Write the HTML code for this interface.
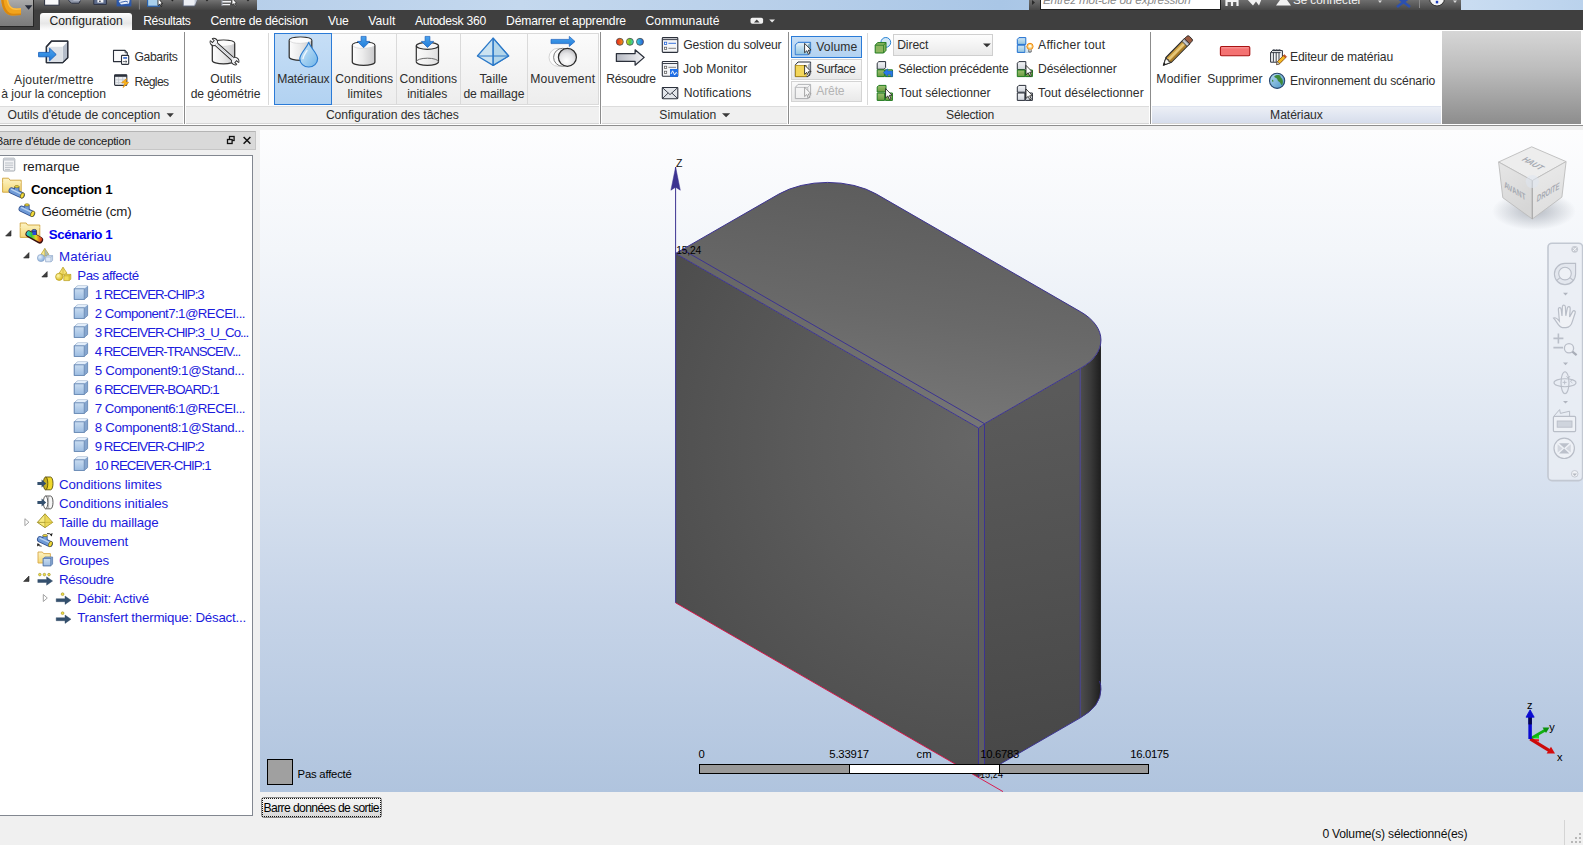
<!DOCTYPE html>
<html lang="fr">
<head>
<meta charset="utf-8">
<title>Autodesk Simulation CFD</title>
<style>
html,body{margin:0;padding:0;background:#f0f0f0;}
body{width:1583px;height:845px;overflow:hidden;font-family:"Liberation Sans",sans-serif;}
#app{position:relative;width:1583px;height:845px;overflow:hidden;background:#f0f0f0;}
#app div,#app svg{position:absolute;}
.t{position:absolute;white-space:nowrap;line-height:20px;font-family:"Liberation Sans",sans-serif;}
/* title bar */
#glass{left:0;top:0;width:1583px;height:10px;background:linear-gradient(90deg,#a8c5e6 0,#b7cfea 250px,#c4d8ee 520px,#b9d0ea 760px,#a9c6e6 1000px,#c9dcf1 1470px,#bad2ec 1583px);}
#qat{left:34px;top:0;width:223px;height:10px;background:linear-gradient(#727272,#585858 50%,#434343);}
#appbtn{left:0;top:0;width:34px;height:27px;background:linear-gradient(#ababab,#8f8f8f 45%,#7a7a7a);border-right:1.5px solid #262626;border-bottom:1.5px solid #262626;box-sizing:border-box;}
#info{left:1029px;top:0;width:432px;height:10px;background:linear-gradient(#6e6e6e,#474747);}
#search{left:1040px;top:-8px;width:179px;height:16px;background:#fff;border:1px solid #1e1e1e;box-sizing:content-box;}
#tabbar{left:0;top:10px;width:1583px;height:20px;background:#3f3f3f;}
#tabact{left:40px;top:13px;width:92px;height:18px;background:linear-gradient(#ffffff 0,#f3f3f3 22%,#e7e7e7 58%,#f8f8f8 85%,#ffffff 100%);border-radius:3px 3px 0 0;}
/* ribbon */
#ribbon{left:0;top:30px;width:1583px;height:95px;background:#fff;}
#ribline{left:0;top:125px;width:1583px;height:1px;background:#8e8e8e;}
.ptitle{top:106px;height:18px;background:#f0f0f0;border-top:1px solid #dcdcdc;border-bottom:1px solid #d6d6d6;box-sizing:border-box;}
.psep{top:32px;width:1px;height:92px;background:#8c8c8c;box-shadow:0 0 0.6px #b0b0b0;}
.tsep{top:33px;width:1px;height:72px;background:#d9d9d9;}
.bigbtn{top:33px;height:72px;background:linear-gradient(#fbfbfb,#ededed);border:1px solid #dadada;box-sizing:border-box;}
.sel{background:linear-gradient(#c6def6,#b2d2f1) !important;border:1px solid #2b7bd7 !important;}
.smbtn{left:791px;width:71px;height:21px;background:linear-gradient(#fafafa,#e9e9e9);border:1px solid #d4d4d4;box-sizing:border-box;}
#combo{left:893px;top:34px;width:100px;height:22px;background:linear-gradient(#fdfdfd,#eaeaea);border:1px solid #cfcfcf;box-sizing:border-box;}
#ribgray{left:1442px;top:31px;width:139px;height:93px;background:linear-gradient(#d6d6d6,#bdbdbd 40%,#8d8d8d);}
/* left panel */
#ptitle{left:0;top:131px;width:256px;height:19px;background:#d9d9d9;border:1px solid #c6c6c6;border-top-color:#b4b4b4;border-left:0;box-sizing:border-box;}
#tree{left:-1px;top:155px;width:254px;height:661px;background:#fff;border:1px solid #828790;box-sizing:border-box;}
/* viewport */
#view{left:260px;top:130px;width:1323px;height:662px;background:linear-gradient(#fdfdfe 0%,#f3f6fa 18%,#dfe7f2 45%,#c6d4e8 72%,#b0c4de 100%);overflow:hidden;}
#outbtn{left:261px;top:797px;width:121px;height:21px;box-sizing:border-box;border:1px solid #8a8a8a;border-radius:3px;background:linear-gradient(#f4f4f4 0,#efefef 50%,#dedede 75%,#d8d8d8 100%);}
#outbtn i{position:absolute;left:0;top:0;right:0;bottom:0;border:1px dotted #111;}
#grip{left:1564px;top:820px;width:1px;height:25px;background:#d4d4d4;}
</style>
</head>
<body>
<div id="app">
<!-- ======= title bar ======= -->
<div id="glass"></div>
<div id="qat"></div>
<div id="info"></div>
<div id="search"></div>
<div id="tabbar"></div>
<div id="appbtn"></div>
<div id="tabact"></div>
<!-- ======= ribbon ======= -->
<div id="ribbon"></div>
<div id="ribgray"></div>
<div class="ptitle" style="left:0;width:183px"></div>
<div class="ptitle" style="left:186px;width:413px"></div>
<div class="ptitle" style="left:602px;width:185px"></div>
<div class="ptitle" style="left:790px;width:359px"></div>
<div class="ptitle" style="left:1152px;width:289px;background:linear-gradient(#eceff6,#d6ddec);border-top-color:#dfe4ef"></div>
<div class="psep" style="left:184px"></div>
<div class="psep" style="left:600px"></div>
<div class="psep" style="left:788px"></div>
<div class="psep" style="left:1150px"></div>
<div class="tsep" style="left:268px"></div>
<div class="tsep" style="left:867px"></div>
<div class="bigbtn sel" style="left:274px;width:58px"></div>
<div class="bigbtn" style="left:332px;width:65px;border-left:0"></div>
<div class="bigbtn" style="left:396px;width:65px"></div>
<div class="bigbtn" style="left:460px;width:68px"></div>
<div class="bigbtn" style="left:527px;width:72px"></div>
<div class="smbtn sel" style="top:36px;height:22px"></div>
<div class="smbtn" style="top:59px"></div>
<div class="smbtn" style="top:81px"></div>
<div id="combo"></div>
<div id="ribline"></div>
<!-- ======= left panel ======= -->
<div id="ptitle"></div>
<div id="tree"></div>
<!-- ======= viewport ======= -->
<div id="view"></div>
<div id="outbtn"><i></i></div>
<div id="grip"></div>
<svg id="scene" style="left:260px;top:130px" width="1323" height="662" viewBox="260 130 1323 662" shape-rendering="auto">
<defs>
  <linearGradient id="gTop" gradientUnits="userSpaceOnUse" x1="827" y1="183" x2="798" y2="405">
    <stop offset="0" stop-color="#5d5d5d"/><stop offset="0.55" stop-color="#696969"/><stop offset="1" stop-color="#767676"/>
  </linearGradient>
  <radialGradient id="gFront" gradientUnits="userSpaceOnUse" cx="975" cy="440" r="400">
    <stop offset="0" stop-color="#666666"/><stop offset="0.45" stop-color="#5a5a5a"/><stop offset="1" stop-color="#494949"/>
  </radialGradient>
  <linearGradient id="gRight" gradientUnits="userSpaceOnUse" x1="1000" y1="400" x2="1060" y2="760">
    <stop offset="0" stop-color="#5a5a5a"/><stop offset="0.5" stop-color="#515151"/><stop offset="1" stop-color="#474747"/>
  </linearGradient>
  <linearGradient id="gRound" gradientUnits="userSpaceOnUse" x1="1080" y1="0" x2="1101" y2="0">
    <stop offset="0" stop-color="#4e4e4e"/><stop offset="0.5" stop-color="#3a3a3a"/><stop offset="1" stop-color="#1d1d1d"/>
  </linearGradient>
  <radialGradient id="gShadow" cx="0.5" cy="0.5" r="0.5">
    <stop offset="0" stop-color="#7f8794" stop-opacity="0.55"/><stop offset="1" stop-color="#7f8794" stop-opacity="0"/>
  </radialGradient>
  <linearGradient id="gCubeL" x1="0" x2="0.4" y1="0" y2="1"><stop offset="0" stop-color="#e6e6e6"/><stop offset="1" stop-color="#d6d6d6"/></linearGradient>
  <linearGradient id="gCubeR" x1="0" x2="0.3" y1="0" y2="1"><stop offset="0" stop-color="#ebebeb"/><stop offset="1" stop-color="#dedede"/></linearGradient>
</defs>
<!-- solid body -->
<g id="body">
  <path id="faceFront" d="M675.6 253.4 L978.5 428 L978.5 777.4 L675.6 602.8 Z" fill="url(#gFront)"/>
  <path id="faceStrip" d="M978.5 428 L984.5 423.7 L984.5 773.1 L978.5 777.4 Z" fill="#5f5f5f"/>
  <path id="faceRight" d="M984.5 423.7 L1080.7 368.2 L1080.7 717.6 L984.5 773.1 Z" fill="url(#gRight)"/>
  <path id="faceRound" d="M1080.7 368.2 A68.95 39.8 0 0 0 1100.95 340 L1100.95 689.4 A68.95 39.8 0 0 1 1080.7 717.6 Z" fill="url(#gRound)"/>
  <path id="faceTop" d="M675.6 253.4 L778.8 194.1 A68.95 39.8 0 0 1 876.4 194.1 L1080.7 311.85 A68.95 39.8 0 0 1 1080.7 368.2 L984.5 423.7 L978.5 428 Z" fill="url(#gTop)"/>
</g>
<!-- feature edges -->
<g fill="none" stroke="#3c3391" stroke-width="1">
  <path d="M675.6 253.4 L778.8 194.1 A68.95 39.8 0 0 1 876.4 194.1 L1080.7 311.85 A68.95 39.8 0 0 1 1080.7 368.2 L984.5 423.7 L978.5 428 Z"/>
  <path d="M682.6 249.6 L984.5 423.7"/>
  <path d="M978.5 428 V777.4 M984.5 423.7 V773.1"/>
  <path d="M1080.2 368.5 V717.6" stroke-opacity="0.9"/>
  <path d="M984.5 773.1 L1080.7 717.6 A68.95 39.8 0 0 0 1100.95 689.4" />
  <path d="M1100.95 689.4 A68.95 39.8 0 0 0 1099.6 681" />
  <path d="M675.6 167 V602.8"/>
</g>
<path d="M675.6 167 L680.3 190.2 L675.6 187.2 L670.9 190.2 Z" fill="#3c3391" stroke="#3c3391" stroke-width="0.5" stroke-linejoin="round"/>
<!-- x axis / bottom edge -->
<path d="M675.6 602.8 L1003 791.6" stroke="#de0a40" stroke-width="0.9" fill="none"/>
<!-- hidden dimension label below the bar -->
<text x="980" y="778.2" font-family="'Liberation Sans',sans-serif" font-size="10.3" fill="#000" textLength="23" lengthAdjust="spacingAndGlyphs">15,24</text>
<!-- scale bar -->
<g stroke="#000" stroke-width="1">
  <rect x="699.5" y="764.5" width="150" height="9" fill="#999999"/>
  <rect x="849.5" y="764.5" width="150" height="9" fill="#ffffff"/>
  <rect x="999.5" y="764.5" width="149" height="9" fill="#999999"/>
</g>
<!-- legend -->
<rect x="267.5" y="759.5" width="25" height="25" fill="#a0a0a0" stroke="#000" stroke-width="1"/>
<!-- axis triad -->
<g id="triad">
  <path d="M1531.4 738.2 L1539 733.8 V738.6 Z" fill="#18e018"/>
  <path d="M1530.2 739 L1539 739.2 V741.4 L1533 740.6 Z" fill="#f01818"/>
  <path d="M1530.4 738.6 L1545.4 730" stroke="#12b012" stroke-width="2.6"/>
  <path d="M1549.4 727.4 L1542.6 727.4 L1546 733 Z" fill="#0c920c"/>
  <path d="M1530.2 738.8 L1549.4 750.6" stroke="#cc0a0a" stroke-width="3.2"/>
  <path d="M1555 753.6 L1546.6 753.6 L1551 746.8 Z" fill="#d40c0c"/>
  <path d="M1530.1 739 V716.5" stroke="#0a0ad2" stroke-width="3.5"/>
  <path d="M1530.1 724.4 V716.5" stroke="#07074a" stroke-width="3.5"/>
  <path d="M1530.1 709.8 L1534.2 717.2 L1526 717.2 Z" fill="#0a0ad2" stroke="#0a0ad2" stroke-width="0.8" stroke-linejoin="round"/>
</g>
<!-- view cube -->
<g id="viewcube">
  <ellipse cx="1534" cy="211" rx="42" ry="19" fill="url(#gShadow)"/>
  <path d="M1531.7 146.8 L1566.1 161.6 L1532.3 180.6 L1498.6 162 Z" fill="#ededed" stroke="#bcbcbc" stroke-width="0.9" stroke-linejoin="round"/>
  <path d="M1498.6 162 L1532.3 180.6 L1532.3 219 L1502.8 197.7 Z" fill="url(#gCubeL)" stroke="#bcbcbc" stroke-width="0.9" stroke-linejoin="round"/>
  <path d="M1532.3 180.6 L1566.1 161.6 L1561.9 197.1 L1532.3 219 Z" fill="url(#gCubeR)" stroke="#bcbcbc" stroke-width="0.9" stroke-linejoin="round"/>
  <path d="M1532.3 180.6 V219" stroke="#a8a8a8" stroke-width="1"/>
  <circle cx="1532.3" cy="181.5" r="6.6" fill="#dfe5f0" fill-opacity="0.55"/>
  <g font-family="'Liberation Sans',sans-serif" font-size="9.6" font-weight="bold" fill="#a6aab2">
    <text transform="matrix(0.70 0.386 -0.87 0.49 1520.9 159.9)">HAUT</text>
    <text transform="matrix(0.68 0.41 0.12 1 1504.4 187.6)">AVANT</text>
    <text transform="matrix(0.60 -0.355 -0.1 1 1536.6 202.2)" font-size="10">DROITE</text>
  </g>
</g>
<!-- navigation bar -->
<g id="navbar" fill="none" stroke="#b9bec8" stroke-width="1.1">
  <rect x="1548" y="243.2" width="34.6" height="237.4" rx="4" fill="#eaeef4" fill-opacity="0.8" stroke="#c2c8d2" stroke-width="1.6"/>
  <circle cx="1574.7" cy="249.3" r="3.4" fill="#c6cad2" stroke="none"/><path d="M1573 247.6 L1576.4 251 M1576.4 247.6 L1573 251" stroke="#f4f6f9" stroke-width="1"/>
  <path d="M1565 263.4 H1575.6 V274 A10.6 10.6 0 1 1 1565 263.4 Z" fill="#e3e7ee"/>
  <circle cx="1565" cy="273.6" r="6.3" fill="#eef1f6"/><path d="M1560 277.6 L1556.6 280.6 M1570 277.6 L1573.4 280.6"/>
  <path d="M1563 292.8 H1568 L1565.5 295.4 Z M1563 362.6 H1568 L1565.5 365.2 Z M1563 363.2 H1568 M1563 401 H1568 L1565.5 403.6 Z" fill="#b0b5bf" stroke="none"/>
  <path d="M1553.6 318 C1556 316.8 1558 319.4 1559.4 321.2 L1558.4 309.6 C1558.2 307 1560.8 307 1561.2 309.4 L1562 316 L1562.4 306.8 C1562.6 304.6 1565.2 304.6 1565.4 307 L1565.8 315.8 L1567.4 308 C1568 305.8 1570.4 306.4 1570.2 308.6 L1569.6 317 L1572.6 311.6 C1573.8 309.8 1575.8 311 1575.2 312.8 L1572.4 321.4 C1571.6 324.4 1569.8 327.4 1566 327.6 H1562.4 C1558.6 327.2 1556.8 321.4 1553.6 318 Z" fill="#f0f2f6" stroke-width="1.2"/>
  <path d="M1558.4 333.4 V343.4 M1553.4 338.4 H1563.4 M1553.4 347.6 H1563" stroke-width="1.6"/>
  <circle cx="1569" cy="348.2" r="4.6" fill="#eef1f6" stroke-width="1.3"/><path d="M1572.4 351.6 L1576.6 355.2" stroke-width="2.2" stroke="#a9aeb8"/>
  <ellipse cx="1565" cy="382.7" rx="11" ry="4"/><ellipse cx="1565" cy="382.7" rx="4" ry="11"/>
  <path d="M1562.6 382.4 H1566.6 M1564.6 380.4 V384.4 M1566.4 376.4 L1568.4 378.4 L1570 376 M1572.6 379.6 L1570.4 381.2 L1572.4 383" stroke-width="0.9"/>
  <rect x="1553.4" y="416.4" width="22.2" height="15.2" rx="1" fill="#eef1f6" stroke-width="1.2"/>
  <rect x="1557.2" y="421" width="14.8" height="6.2" fill="#cfd4dd" stroke-width="0.9"/>
  <path d="M1554 416 L1559.6 409.6 L1560.4 413.4 L1569.6 411.2 V416" stroke-width="1"/>
  <circle cx="1564.2" cy="448.3" r="10.2" fill="#eef1f6" stroke-width="1.2"/>
  <path d="M1559 443.2 H1569.4 L1564.2 448 Z M1559 453.6 H1569.4 L1564.2 448.6 Z" fill="#bcc1cb" stroke="none"/>
  <path d="M1557.6 444.2 L1562.6 448.4 L1557.6 452.6 Z M1570.8 444.2 L1565.8 448.4 L1570.8 452.6 Z" fill="#d3d7df" stroke="none"/>
  <circle cx="1574.7" cy="473.8" r="3.3" fill="#f0f2f6" stroke="#c2c6ce" stroke-width="0.9"/><path d="M1572.4 473.4 H1577 L1574.7 476 Z" fill="#b4b8c0" stroke="none"/>
</g>
</svg>
<svg id="sizegrip" style="left:1570px;top:832px" width="13" height="13" viewBox="0 0 13 13"><g fill="#b8b8b8"><rect x="9" y="9" width="2" height="2"/><rect x="9" y="5" width="2" height="2"/><rect x="5" y="9" width="2" height="2"/><rect x="9" y="1" width="2" height="2"/><rect x="5" y="5" width="2" height="2"/><rect x="1" y="9" width="2" height="2"/></g></svg>
<svg id="ribicons" style="left:0;top:0" width="1583" height="130" viewBox="0 0 1583 130">
<defs>
  <linearGradient id="cylG" x1="0" x2="1" y1="0" y2="0"><stop offset="0" stop-color="#fdfdfd"/><stop offset="0.45" stop-color="#ececec"/><stop offset="1" stop-color="#c9c9cb"/></linearGradient>
  <linearGradient id="blueG" x1="0" x2="0" y1="0" y2="1"><stop offset="0" stop-color="#4ba3ee"/><stop offset="1" stop-color="#1f7bd8"/></linearGradient>
  <linearGradient id="dropG" x1="0" x2="1" y1="0" y2="1"><stop offset="0" stop-color="#d8ecfa"/><stop offset="1" stop-color="#6fb4e8"/></linearGradient>
  <linearGradient id="arrG" x1="0" x2="1" y1="0" y2="0"><stop offset="0" stop-color="#b4b8c2"/><stop offset="1" stop-color="#f4f4f6"/></linearGradient>
  <linearGradient id="d1" x1="0" x2="1"><stop offset="0" stop-color="#e8201c"/><stop offset="1" stop-color="#f09a18"/></linearGradient>
  <linearGradient id="d2" x1="0" x2="1"><stop offset="0" stop-color="#f0d818"/><stop offset="0.5" stop-color="#58c838"/><stop offset="1" stop-color="#38d8d8"/></linearGradient>
  <linearGradient id="d3" x1="0" x2="1"><stop offset="0" stop-color="#38d8e0"/><stop offset="1" stop-color="#2858d8"/></linearGradient>
  <radialGradient id="ballG" cx="0.45" cy="0.7" r="0.7"><stop offset="0" stop-color="#ffffff"/><stop offset="0.6" stop-color="#e4e4e6"/><stop offset="1" stop-color="#b8b8bc"/></radialGradient>
  <linearGradient id="grnG" x1="0" x2="0" y1="0" y2="1"><stop offset="0" stop-color="#9cc070"/><stop offset="1" stop-color="#6a9a40"/></linearGradient>
  <linearGradient id="gryG" x1="0" x2="0" y1="0" y2="1"><stop offset="0" stop-color="#f4f5f7"/><stop offset="1" stop-color="#cfd3da"/></linearGradient>
  <linearGradient id="lbG" x1="0" x2="0" y1="0" y2="1"><stop offset="0" stop-color="#cfe6f4"/><stop offset="1" stop-color="#92c4e0"/></linearGradient>
  <linearGradient id="globeG" x1="0" x2="1" y1="0" y2="1"><stop offset="0" stop-color="#b8dcf0"/><stop offset="1" stop-color="#4a94c8"/></linearGradient>
  <path id="cursor" d="M0 0 L0 10.2 L2.4 8 L4.2 11.8 L5.8 11 L4 7.4 L7 7.2 Z" fill="#fff" stroke="#1a1a1a" stroke-width="0.9" stroke-linejoin="round"/>
</defs>

<!-- application button -->
<g id="appicon">
  <path d="M1.2 -3 C1.2 6 4 15.7 13 15.6 L21 15 V8.2 L16.4 8.5 C10.6 8.5 8 4 7.8 -3 Z" fill="#f2a41c"/>
  <path d="M1.2 -3 C1.2 6 4 15.7 13 15.6 L21 15 V13.4 L13.4 13.8 C6.6 13.8 3.6 6 3.4 -3 Z" fill="#d8870f"/>
  <path d="M7.8 -3 C8 4 10.6 8.5 16.4 8.5 L21 8.2 V9.6 L16.2 9.9 C9.6 9.9 6.6 4.4 6.4 -3 Z" fill="#f9bf4a"/>
  <path d="M24.8 5.2 H32.4 L28.6 9.8 Z" fill="#252a38"/>
</g>
<!-- quick access icons (clipped by window top) -->
<g id="qaticons">
  <rect x="44.6" y="-4" width="14.4" height="9.2" fill="#f8f9fb" stroke="#2c3140" stroke-width="1"/>
  <path d="M68.8 -3 H82.2 L79 3.2 H71.4 L68.8 0.6 Z" fill="#9098aa" stroke="#2c3140" stroke-width="1"/>
  <path d="M72 -3 H82.2 L80.4 0.4 H73.4 Z" fill="#c8cedb"/>
  <path d="M93.8 -4 V4.4 H106.4 V-4 Z" fill="#5d6c8c" stroke="#2c3140" stroke-width="1"/>
  <rect x="97.4" y="-2" width="6" height="4.6" fill="#f2f4f8"/><rect x="99.2" y="0.6" width="1.4" height="1.4" fill="#2c3140"/>
  <path d="M116.6 -3 H131.4 V6.4 H116.6 Z" fill="#2d58a8"/><path d="M118.6 1 L123 -1 L129.6 0 L129 3.4 L121 4.6 Z" fill="#e9eef8"/><path d="M120.4 2.4 L126 1.2 L128 2.2" stroke="#2d58a8" stroke-width="0.9" fill="none"/>
  <path d="M139.4 -2 V9.5" stroke="#858585" stroke-width="1"/>
  <rect x="147.6" y="-4" width="11.6" height="10.2" fill="#a9d0ec" stroke="#2560b0" stroke-width="1.1"/>
  <path d="M158 -2 V5.6 L159.8 4.2 L161 6.6 L162 6 L160.8 3.8 L162.6 3.6 Z" fill="#fff" stroke="#111" stroke-width="0.8" stroke-linejoin="round"/>
  <path d="M183.2 -3 H198 L194.6 6 H183.2 Z" fill="#eceff4" stroke="#5c6478" stroke-width="0.9"/><path d="M194.6 -3 H198 L194.6 6 Z" fill="#c2c8d4"/>
  <path d="M222 -1 H233 M222 1.8 H231 M222 4.6 H230" stroke="#f2f3f6" stroke-width="1.4"/><path d="M222 -2 V6" stroke="#9aa0ae" stroke-width="1"/>
  <path d="M232 -2 V5 L233.8 3.8 L235 6.2 L236 5.6 L234.8 3.4 L236.6 3.2 Z" fill="#fff" stroke="#222" stroke-width="0.7" stroke-linejoin="round"/>
  <path d="M170.6 -0.6 H174.2 L172.4 1.6 Z M205.2 -0.6 H208.8 L207 1.6 Z M246.2 -0.6 H249.8 L248 1.6 Z" fill="#222"/>
</g>
<!-- title fragments: search tools -->
<g id="infoicons">
  <path d="M1032 0 L1035 2.5 L1032 5 Z" fill="#2a2a2a"/>
  <path d="M1226.5 -2 V6 M1232 -2 V6 M1237.5 -2 V6 M1226.5 1 H1237.5" stroke="#f2f2f2" stroke-width="2.2"/>
  <path d="M1246 -2 L1253 5.5 L1256 1.5 L1259 5.5 L1262 -2 Z" fill="#f2f2f2"/>
  <path d="M1276 5.4 H1291 L1287 0 H1280 Z" fill="#f2f2f2"/>
  <path d="M1397 -3 L1410 7 M1410 -3 L1397 7" stroke="#2b50b0" stroke-width="2.6"/>
  <path d="M1378 0.5 H1382 L1380 3 Z M1453 0.5 H1457 L1455 3 Z" fill="#d8d8d8"/>
  <path d="M1419.5 -2 V8" stroke="#8a8a8a" stroke-width="1"/>
  <circle cx="1437" cy="-1.5" r="7.5" fill="#f4f4f4" stroke="#2a2a2a" stroke-width="1"/>
  <rect x="1435.8" y="0.8" width="2.4" height="2.6" fill="#2040c0"/>
</g>
<!-- ribbon minimise toggle -->
<g id="tabtoggle">
  <rect x="750.5" y="17.8" width="12.6" height="6" rx="1.8" fill="#f0f0f0"/>
  <path d="M754 22.4 L756.8 19.4 L759.6 22.4 Z" fill="#3f3f3f"/>
  <path d="M769.2 19.6 H775 L772.1 22.6 Z" fill="#e8e8e8"/>
</g>
<!-- panel title dropdown arrows -->
<path d="M166.6 113.2 H173.8 L170.2 117.2 Z M722 113.2 H730.2 L726.1 117.2 Z" fill="#3a3a3a"/>
<path d="M983 43.4 H990.8 L986.9 47.2 Z" fill="#333"/>

<!-- Ajouter/mettre à jour la conception -->
<g id="icoAdd">
  <path d="M46.4 46.8 L51.4 41.2 H67.7 V57.8 L62.7 62.6 H46.4 Z" fill="#fff" stroke="#2b303b" stroke-width="1.3" stroke-linejoin="round"/>
  <path d="M62.8 46.8 L67.7 41.6 V57.6 L62.8 62.4 Z" fill="#b4bcc9"/>
  <rect x="47" y="46.8" width="15.8" height="15.4" fill="#dde1e7"/>
  <path d="M46.4 46.8 L51.4 41.2 H67.7 V57.8 L62.7 62.6 H46.4 Z" fill="none" stroke="#2b303b" stroke-width="1.3" stroke-linejoin="round"/>
  <path d="M38.6 52.4 H49.6 V48.2 L56.2 54.5 L49.6 60.8 V56.8 H38.6 Z" fill="url(#blueG)" stroke="#1b62bd" stroke-width="0.9" stroke-linejoin="round"/>
</g>
<!-- Gabarits -->
<g id="icoGab" stroke="#2b303b" stroke-width="1.1" stroke-linejoin="round">
  <path d="M113.5 50.4 H125 L127.3 52.8 V61.6 H113.5 Z" fill="#fbfbfc"/>
  <path d="M125 50.4 V52.8 H127.3" fill="none" stroke-width="0.7"/>
  <rect x="121.5" y="55.4" width="7.2" height="9" rx="0.8" fill="#fff"/>
  <rect x="123.2" y="57.2" width="3.9" height="1.5" fill="#2257c8" stroke="none"/>
  <path d="M122.8 61.6 H126.8 M125.6 60.4 L126.9 61.6 L125.6 62.8" fill="none" stroke-width="0.7"/>
</g>
<!-- Règles -->
<g id="icoReg">
  <rect x="114.6" y="74.8" width="12.2" height="10.6" rx="0.8" fill="#eceef1" stroke="#2b303b" stroke-width="1.1"/>
  <rect x="114.6" y="74.8" width="12.2" height="2" fill="#2b303b"/>
  <path d="M118.6 77 V85 M122.7 77 V85 M115 79.8 H126.4 M115 82.6 H126.4" stroke="#c2c6cd" stroke-width="0.8"/>
  <path d="M126.6 78.6 L121.6 82.6 L124.8 83.2 L123 87.6 L128.8 82.4 L125.6 81.8 Z" fill="#f9b418" stroke="#e28a08" stroke-width="0.6" stroke-linejoin="round"/>
</g>
<!-- Outils de géométrie -->
<g id="icoTools">
  <path d="M212.3 43.2 V60.4 A11.20 3.4000000000000004 0 0 0 234.7 60.4 V43.2 A11.20 3.2 0 0 0 212.3 43.2 Z" fill="url(#cylG)" stroke="#303030" stroke-width="1.25" stroke-linejoin="round"/><ellipse cx="223.5" cy="43.2" rx="10.50" ry="2.6" fill="#fcfcfc"/><path d="M213.10000000000002 43.6 A10.40 3.0 0 0 0 233.89999999999998 43.6" fill="none" stroke="#d9d9db" stroke-width="0.8"/>
  <g transform="translate(213.8 42) rotate(41.9)">
    <rect x="2.6" y="-1.75" width="23.6" height="3.5" fill="#f3f4f6" stroke="#2e2e2e" stroke-width="1"/>
    <path d="M3.4 -0.1 H25.4" stroke="#b4b8c0" stroke-width="0.7"/>
    <circle cx="0" cy="0" r="3.7" fill="#f3f4f6" stroke="#2e2e2e" stroke-width="1.05"/>
    <rect x="-5.2" y="-1.25" width="4.6" height="2.5" fill="#ffffff"/>
    <path d="M-3.4 -1.3 H-0.7 V1.3 H-3.4" fill="none" stroke="#2e2e2e" stroke-width="0.95"/>
    <circle cx="28.75" cy="0" r="3.7" fill="#f3f4f6" stroke="#2e2e2e" stroke-width="1.05"/>
    <rect x="29.4" y="-1.25" width="4.6" height="2.5" fill="#ffffff"/>
    <path d="M32.2 -1.3 H29.4 V1.3 H32.2" fill="none" stroke="#2e2e2e" stroke-width="0.95"/>
    <rect x="2.9" y="-1.25" width="1.6" height="2.5" fill="#f3f4f6"/><rect x="24.4" y="-1.25" width="1.6" height="2.5" fill="#f3f4f6"/>
  </g>
</g>
<!-- Matériaux -->
<g id="icoMat">
  <path d="M289.2 40.2 V57 A11.30 3.4000000000000004 0 0 0 311.8 57 V40.2 A11.30 3.2 0 0 0 289.2 40.2 Z" fill="url(#cylG)" stroke="#303030" stroke-width="1.25" stroke-linejoin="round"/><ellipse cx="300.5" cy="40.2" rx="10.60" ry="2.6" fill="#fcfcfc"/><path d="M290.0 40.6 A10.50 3.0 0 0 0 311.0 40.6" fill="none" stroke="#d9d9db" stroke-width="0.8"/>
  <path d="M308.7 42.4 C306.6 48.4 299.8 53.4 299.8 58.8 A8.9 8.2 0 0 0 317.6 58.8 C317.6 53.4 310.8 48.4 308.7 42.4 Z" fill="url(#dropG)" stroke="#2a7cd0" stroke-width="1.2" stroke-linejoin="round"/>
  <path d="M303 58.6 C303.4 55.4 305.6 52.8 307 50.6" stroke="#fff" stroke-width="1.4" fill="none" stroke-opacity="0.8" stroke-linecap="round"/>
</g>
<!-- Conditions limites -->
<g id="icoBC">
  <path d="M352.3 45.2 V62 A11.30 3.4000000000000004 0 0 0 374.9 62 V45.2 A11.30 3.2 0 0 0 352.3 45.2 Z" fill="url(#cylG)" stroke="#303030" stroke-width="1.25" stroke-linejoin="round"/><ellipse cx="363.6" cy="45.2" rx="10.60" ry="2.6" fill="#fcfcfc"/><path d="M353.1 45.6 A10.50 3.0 0 0 0 374.09999999999997 45.6" fill="none" stroke="#d9d9db" stroke-width="0.8"/>
  <path d="M361.1 36.4 H366.1 V41.4 H369.8 L363.6 47.8 L357.4 41.4 H361.1 Z" fill="url(#blueG)" stroke="#1b62bd" stroke-width="0.7" stroke-linejoin="round"/>
</g>
<!-- Conditions initiales -->
<g id="icoIC">
  <path d="M416.3 45.8 V61.8 A11.1 3.6 0 0 0 438.5 61.8 V45.8" fill="url(#cylG)" fill-opacity="0.55" stroke="#303030" stroke-width="1.2"/>
  <ellipse cx="427.4" cy="45.8" rx="11.1" ry="3.5" fill="#f4f4f5" stroke="#303030" stroke-width="1.2"/>
  <path d="M416.3 61.8 A11.1 3.6 0 0 1 438.5 61.8" fill="none" stroke="#6a6a6a" stroke-width="1"/>
  <path d="M425.1 36.4 H429.9 V41.4 H433.7 L427.5 47.5 L421.4 41.4 H425.1 Z" fill="url(#blueG)" stroke="#1b62bd" stroke-width="0.7" stroke-linejoin="round"/>
</g>
<!-- Taille de maillage -->
<g id="icoMesh" stroke="#2a78c8" stroke-width="1.25" stroke-linejoin="round">
  <path d="M493.1 38.2 L508.6 56 L493.1 65.4 L477.4 56 Z" fill="#cbe3f1"/>
  <path d="M493.1 38.2 L508.6 56 L493.1 65.4 Z" fill="#b3d6ea"/>
  <path d="M493.1 38.2 V65.4 M477.4 56 H508.6" fill="none" stroke-width="1"/>
</g>
<!-- Mouvement -->
<g id="icoMove">
  <path d="M551 39.4 H569.3 V36.4 L575 41.5 L569.3 46.4 V43.6 H551 Z" fill="url(#blueG)" stroke="#1b62bd" stroke-width="0.7" stroke-linejoin="round"/>
  <circle cx="558" cy="57.3" r="9" fill="#fdfdfd" stroke="#cfcfcf" stroke-width="0.9"/>
  <circle cx="562.6" cy="57.3" r="9" fill="#fafafa" stroke="#7c7c7c" stroke-width="1"/>
  <circle cx="567.4" cy="57.3" r="9" fill="url(#ballG)" stroke="#2a2a2a" stroke-width="1.25"/>
</g>
<!-- Résoudre -->
<g id="icoSolve">
  <circle cx="619.8" cy="41.8" r="3.5" fill="url(#d1)" stroke="#4a4a4a" stroke-width="0.8"/>
  <circle cx="629.9" cy="41.8" r="3.5" fill="url(#d2)" stroke="#4a4a4a" stroke-width="0.8"/>
  <circle cx="640" cy="41.8" r="3.5" fill="url(#d3)" stroke="#4a4a4a" stroke-width="0.8"/>
  <path d="M616.4 53.6 H635.1 V49.8 L644.2 57.4 L635.1 65.2 V61.4 H616.4 Z" fill="url(#arrG)" stroke="#2b303b" stroke-width="1.25" stroke-linejoin="round"/>
</g>
<!-- Gestion du solveur -->
<g id="icoGest">
  <rect x="662.3" y="37.6" width="15.5" height="14.8" rx="0.8" fill="#f4f5f7" stroke="#2b303b" stroke-width="1.1"/>
  <path d="M662.6 39.6 H677.6" stroke="#2b303b" stroke-width="0.9"/>
  <rect x="664.5" y="42.2" width="2.2" height="2.2" fill="#fff" stroke="#2464d8" stroke-width="0.8"/>
  <path d="M668.4 43.3 H676" stroke="#2464d8" stroke-width="0.9"/>
  <rect x="664.5" y="47.2" width="2.2" height="2.2" fill="#fff" stroke="#555" stroke-width="0.7"/>
  <path d="M668.4 48.3 H676" stroke="#666" stroke-width="0.8"/>
</g>
<!-- Job Monitor -->
<g id="icoJob">
  <rect x="662.3" y="61.5" width="15.5" height="14.8" rx="0.8" fill="#f4f5f7" stroke="#2b303b" stroke-width="1.1"/>
  <path d="M662.6 63.5 H677.6" stroke="#2b303b" stroke-width="0.9"/>
  <rect x="664.5" y="66.2" width="2.2" height="2.2" fill="#fff" stroke="#555" stroke-width="0.7"/>
  <path d="M668.4 67.3 H676" stroke="#666" stroke-width="0.8"/>
  <rect x="664.5" y="71.2" width="2.2" height="2.2" fill="#fff" stroke="#555" stroke-width="0.7"/>
  <rect x="670" y="69" width="8" height="7.8" fill="#1f6fe8"/>
  <path d="M671 74 L672.6 70.8 L674.6 75 L676 72.4 L677.4 73.6" fill="none" stroke="#fff" stroke-width="0.9"/>
</g>
<!-- Notifications -->
<g id="icoNotif" stroke="#2b303b" stroke-width="1.1" stroke-linejoin="round">
  <rect x="662.3" y="87.5" width="15.5" height="11.2" rx="0.6" fill="#e3e6ea"/>
  <path d="M662.6 87.8 L670 94.6 L677.5 87.8 M662.6 98.4 L668.2 93 M677.5 98.4 L671.8 93" fill="none" stroke-width="0.9"/>
</g>
<!-- Volume / Surface / Arête -->
<g id="icoVol">
  <path d="M795.3 45 L798 42.3 H810.6 V52 L808 54.7 H795.3 Z" fill="#dcecf5" stroke="#1f6fd0" stroke-width="1" stroke-linejoin="round"/>
  <rect x="795.8" y="45.4" width="11.8" height="8.8" fill="url(#lbG)"/>
  <path d="M807.8 45 L810.4 42.6 V51.8 L807.8 54.4 Z" fill="#7aa8c0"/>
  <use href="#cursor" x="0" y="0" transform="translate(804.6 43.4) scale(0.92)"/>
</g>
<g id="icoSurf">
  <path d="M795.3 65 L798 62 H810.6 V73.6 L808 76.6 H795.3 Z" fill="#fbfbfb" stroke="#2b303b" stroke-width="1" stroke-linejoin="round"/>
  <rect x="795.6" y="65.4" width="10.6" height="11" fill="#f3d65a" stroke="#b08c18" stroke-width="0.8"/>
  <path d="M807.8 65 L810.4 62.4 V73.4 L807.8 76.2 Z" fill="#a8b0bc"/>
  <use href="#cursor" transform="translate(804.6 65) scale(0.92)"/>
</g>
<g id="icoEdge" opacity="0.42">
  <path d="M795.3 87.4 L798 84.4 H810.6 V95.6 L808 98.6 H795.3 Z" fill="#f6f6f6" stroke="#55595f" stroke-width="1" stroke-linejoin="round"/>
  <path d="M795.3 87.4 H807.8 V98.4 M807.8 87.4 L810.4 84.6" fill="none" stroke="#55595f" stroke-width="0.8"/>
  <use href="#cursor" transform="translate(804.6 87.2) scale(0.92)"/>
</g>
<!-- Direct selection icon -->
<g id="icoDirect">
  <circle cx="885.8" cy="42.4" r="4.9" fill="#d4e8f6" stroke="#2a84d4" stroke-width="1"/>
  <path d="M875.2 45.2 L877.6 42.6 H886 V50.4 L883.6 53 H875.2 Z" fill="#8db560" stroke="#1f7a1f" stroke-width="1" stroke-linejoin="round"/>
  <path d="M875.2 45.2 H883.6 V53 M883.6 45.2 L886 42.6" fill="none" stroke="#1f7a1f" stroke-width="0.8"/>
</g>
<!-- Sélection précédente -->
<g id="icoPrev" stroke-linejoin="round">
  <path d="M877.2 63.2 L878.8 61.6 H885.6 V67.6 L884 69.2 H877.2 Z" fill="url(#gryG)" stroke="#2b303b" stroke-width="1"/>
  <rect x="877.2" y="69.8" width="7.2" height="6.8" fill="url(#grnG)" stroke="#1f7a1f" stroke-width="1"/>
  <rect x="885.2" y="69.8" width="7.2" height="6.8" fill="url(#grnG)" stroke="#1f7a1f" stroke-width="1"/>
  <path d="M883.4 72.6 L887.6 68.8 V71 H892.6 V76.6 H890.8 V74.2 H887.6 V76.4 Z" fill="#2a7ae8" stroke="#1b5cc0" stroke-width="0.5"/>
</g>
<!-- Tout sélectionner -->
<g id="icoAll" stroke-linejoin="round">
  <path d="M877.2 87 L878.8 85.4 H886 V92 H877.2 Z" fill="url(#grnG)" stroke="#1f7a1f" stroke-width="1"/>
  <rect x="877.2" y="93" width="7.4" height="7.4" fill="url(#grnG)" stroke="#1f7a1f" stroke-width="1"/>
  <rect x="885.4" y="93" width="7" height="7.4" fill="url(#grnG)" stroke="#1f7a1f" stroke-width="1"/>
  <use href="#cursor" transform="translate(885.6 88.6) scale(0.92)"/>
</g>
<!-- Afficher tout -->
<g id="icoShow" stroke-linejoin="round">
  <path d="M1017.3 39.4 L1018.9 37.6 H1025.8 V44.4 H1017.3 Z" fill="url(#lbG)" stroke="#1f6fd0" stroke-width="1"/>
  <rect x="1017.3" y="45.2" width="7.6" height="7.2" fill="url(#lbG)" stroke="#1f6fd0" stroke-width="1"/>
  <rect x="1025.4" y="46.6" width="5" height="5.8" fill="#d6e8f4" stroke="#9ac0dc" stroke-width="0.7"/>
  <circle cx="1030" cy="46.4" r="3.1" fill="#fcd27a" stroke="#f08a10" stroke-width="1"/>
  <circle cx="1030" cy="46.2" r="1.4" fill="#fffbe8"/>
  <path d="M1028.8 49.6 V52 H1031.2 V49.6" fill="#e8e8e8" stroke="#3a3a3a" stroke-width="0.7"/>
</g>
<!-- Désélectionner -->
<g id="icoDesel" stroke-linejoin="round">
  <path d="M1017.3 63.2 L1018.9 61.6 H1025.8 V68.4 L1024.4 69.6 H1017.3 Z" fill="url(#gryG)" stroke="#2b303b" stroke-width="1"/>
  <rect x="1017.3" y="70" width="7.6" height="6.6" fill="url(#grnG)" stroke="#1f7a1f" stroke-width="1"/>
  <rect x="1025.4" y="70" width="7" height="6.6" fill="url(#grnG)" stroke="#1f7a1f" stroke-width="1"/>
  <use href="#cursor" transform="translate(1026 65.4) scale(0.92)"/>
</g>
<!-- Tout désélectionner -->
<g id="icoDeselAll" stroke-linejoin="round">
  <path d="M1017.3 87 L1018.9 85.4 H1025.8 V92.2 H1017.3 Z" fill="url(#gryG)" stroke="#2b303b" stroke-width="1"/>
  <rect x="1017.3" y="93" width="7.6" height="7.4" fill="url(#gryG)" stroke="#2b303b" stroke-width="1"/>
  <rect x="1025.4" y="93" width="7" height="7.4" fill="url(#gryG)" stroke="#2b303b" stroke-width="1"/>
  <use href="#cursor" transform="translate(1026 89) scale(0.92)"/>
</g>
<!-- Modifier (pencil) -->
<g id="icoPencil" transform="translate(1163.4 65.2) rotate(-45.4)">
  <path d="M0 0 L7.6 -3.6 H34 V3.6 H7.6 Z" fill="#c99b3c" stroke="#2b2b2b" stroke-width="1.1" stroke-linejoin="round"/>
  <path d="M7.6 -1.4 H30 V1.2 H7.6 Z" fill="#e7c778"/>
  <path d="M7.6 1.2 H30 V3.2 H7.6 Z" fill="#a97c28"/>
  <path d="M0 0 L7.6 -3.6 L6.4 -1.2 L7.6 0 L6.4 1.2 L7.6 3.6 Z" fill="#fbfbf8" stroke="#2b2b2b" stroke-width="0.9" stroke-linejoin="round"/>
  <path d="M0 0 L2.4 -1.1 V1.1 Z" fill="#111"/>
  <rect x="30" y="-3.6" width="3.6" height="7.2" fill="#d6d8dc" stroke="#2b2b2b" stroke-width="0.8"/>
  <path d="M31.2 -3.4 V3.4 M32.4 -3.4 V3.4" stroke="#8a8e96" stroke-width="0.5"/>
  <path d="M33.6 -3.6 H37 A1.8 1.8 0 0 1 38.8 -1.8 V1.8 A1.8 1.8 0 0 1 37 3.6 H33.6 Z" fill="#9c5c42" stroke="#2b2b2b" stroke-width="0.9"/>
</g>
<!-- Supprimer -->
<g id="icoDel">
  <rect x="1220.4" y="46.5" width="29.4" height="9.2" rx="1.2" fill="#f47272" stroke="#a81212" stroke-width="1.1"/>
  <path d="M1221.6 47.8 H1248.6" stroke="#f9a0a0" stroke-width="0.9"/>
</g>
<!-- Editeur de matériau -->
<g id="icoEdit">
  <path d="M1270.6 52.4 L1272.4 50.6 H1282.4 V60.4 L1280.6 62.2 H1270.6 Z" fill="#f2f3f5" stroke="#2b303b" stroke-width="1" stroke-linejoin="round"/>
  <path d="M1273.4 52.4 V61.8 M1276.2 52.4 V61.8 M1279 52.4 V61.8 M1270.8 52.6 H1280.6" stroke="#2b303b" stroke-width="0.9"/>
  <path d="M1272.4 50.8 a1.4 1.2 0 0 1 2.8 0 a1.4 1.2 0 0 1 2.8 0 a1.4 1.2 0 0 1 2.8 0" fill="none" stroke="#2b303b" stroke-width="0.8"/>
  <path d="M1276.6 64.6 L1277.4 61.6 L1283.4 55.6 L1285.6 57.8 L1279.6 63.8 Z" fill="#f6b820" stroke="#8a4a10" stroke-width="0.8" stroke-linejoin="round"/>
  <path d="M1276.6 64.6 L1277.4 61.6 L1279.6 63.8 Z" fill="#fff" stroke="#2b2b2b" stroke-width="0.6"/>
  <path d="M1283.4 55.6 L1284.4 54.6 L1286.6 56.8 L1285.6 57.8 Z" fill="#d85a28" stroke="#8a2a10" stroke-width="0.5"/>
</g>
<!-- Environnement du scénario (globe) -->
<g id="icoGlobe">
  <circle cx="1277.1" cy="80.8" r="7.6" fill="url(#globeG)" stroke="#27466e" stroke-width="1.1"/>
  <path d="M1274.2 76.4 C1276 74.4 1279.4 74.6 1280.6 75.8 C1279.8 77 1281.6 77.8 1282.4 79.6 C1283.4 81.6 1283 84.4 1281.6 85.6 C1280.8 84 1280.2 82.4 1278.8 81.6 C1277.4 80.8 1277.8 79 1276.6 78.2 C1275.6 77.6 1274.6 77.6 1274.2 76.4 Z" fill="#3f8a3a"/>
  <path d="M1272 79.8 C1273.2 79.6 1273.8 80.8 1273.2 81.8 C1272.6 82.2 1271.8 81.2 1272 79.8 Z" fill="#3f8a3a"/>
</g>
</svg>
<svg id="treeicons" style="left:0;top:130px" width="256" height="500" viewBox="0 130 256 500">
<defs>
 <linearGradient id="cubF" x1="0" x2="0" y1="0" y2="1"><stop offset="0" stop-color="#c9dcf0"/><stop offset="1" stop-color="#9dbde2"/></linearGradient>
 <linearGradient id="foldG" x1="0" x2="0" y1="0" y2="1"><stop offset="0" stop-color="#fdf3c4"/><stop offset="1" stop-color="#f4d878"/></linearGradient>
 <linearGradient id="rainG" x1="0" x2="1" y1="0" y2="0"><stop offset="0" stop-color="#2838d8"/><stop offset="0.3" stop-color="#28c8d8"/><stop offset="0.5" stop-color="#38c838"/><stop offset="0.7" stop-color="#e8d828"/><stop offset="1" stop-color="#d82818"/></linearGradient>
 <linearGradient id="pipeG" x1="0" x2="0" y1="0" y2="1"><stop offset="0" stop-color="#9cc0ea"/><stop offset="1" stop-color="#4a7cc0"/></linearGradient>
 <radialGradient id="sphB" cx="0.35" cy="0.35" r="0.7"><stop offset="0" stop-color="#e8f2fc"/><stop offset="1" stop-color="#7fa8d8"/></radialGradient>
 <radialGradient id="sphY" cx="0.35" cy="0.35" r="0.7"><stop offset="0" stop-color="#fff8b0"/><stop offset="1" stop-color="#d8b818"/></radialGradient>
 <g id="tcube"><path d="M0.5 3.2 L3.8 0.5 H13.8 V11 L10.4 13.8 H0.5 Z" fill="#86a6cf" stroke="#6c8cb6" stroke-width="0.9" stroke-linejoin="round"/>
   <path d="M0.5 3.2 L3.8 0.5 H13.8 L10.4 3.2 Z" fill="#e3eefa"/><rect x="0.5" y="3.2" width="9.9" height="10.6" fill="url(#cubF)" stroke="#6c8cb6" stroke-width="0.9"/></g>
 <g id="tee"><path d="M2.8 5.4 L12.6 10" stroke="#2f4f8f" stroke-width="6.4" stroke-linecap="round" fill="none"/><path d="M7.8 6 V1.6" stroke="#2f4f8f" stroke-width="5.2" fill="none"/>
   <path d="M2.8 5.4 L12.6 10" stroke="#6f9ad6" stroke-width="4.8" stroke-linecap="round" fill="none"/><path d="M7.8 6.4 V1.8" stroke="#6f9ad6" stroke-width="3.6" fill="none"/>
   <path d="M2.6 4.2 L12 8.6" stroke="#b9d3f1" stroke-width="1.3" stroke-linecap="round" fill="none"/>
   <ellipse cx="13.3" cy="10.3" rx="1.7" ry="2.9" transform="rotate(25 13.3 10.3)" fill="#f4dc3c" stroke="#6a5e14" stroke-width="0.7"/>
   <ellipse cx="7.8" cy="1.5" rx="2.3" ry="1.1" fill="#f4dc3c" stroke="#6a5e14" stroke-width="0.6"/></g>
 <g id="sarrow"><path d="M0 3.3 H8.8 V0.6 L14.8 4.8 L8.8 9 V6.3 H0 Z" fill="#34506e" stroke="#2a4460" stroke-width="0.4"/></g>
 <path id="expD" d="M5.4 0 V5.4 H0 Z" fill="#404040" stroke="#262626" stroke-width="0.6"/>
 <path id="expR" d="M0.5 0.5 L4.5 4 L0.5 7.5 Z" fill="#fff" stroke="#989898" stroke-width="0.9"/>
<linearGradient id="rainG2" gradientUnits="userSpaceOnUse" x1="27" y1="0" x2="42" y2="0"><stop offset="0" stop-color="#28c8d8"/><stop offset="0.3" stop-color="#38c838"/><stop offset="0.6" stop-color="#e8d828"/><stop offset="1" stop-color="#d82818"/></linearGradient>
</defs>
<g id="icoNote"><rect x="3.4" y="158.2" width="11.4" height="12.8" rx="1" fill="#f2f3f5" stroke="#9aa0a8" stroke-width="0.9"/><rect x="3.4" y="158" width="11.4" height="2.6" fill="#c8ccd2"/><path d="M5 163 H13.2 M5 165.2 H13.2 M5 167.4 H13.2 M5 169.4 H10" stroke="#aeb4bc" stroke-width="0.8"/></g>
<g id="icoDesign"><path d="M2.6 192.2 V178.2 H8.6 L10 180.2 H21.2 V192.2 Z" fill="url(#foldG)" stroke="#cfa33a" stroke-width="0.9" stroke-linejoin="round"/><path d="M2.8 182.6 H21" stroke="#f9ecb0" stroke-width="1"/><use href="#tee" transform="translate(9 185.2) scale(1.0)"/></g>
<use href="#tee" transform="translate(19 203.4) scale(1.02)"/>
<g id="icoScen"><path d="M20.2 237.4 V223 H26.2 L27.6 225 H39.8 V237.4 Z" fill="url(#foldG)" stroke="#cfa33a" stroke-width="0.9" stroke-linejoin="round"/><path d="M20.4 227.4 H39.6" stroke="#f9ecb0" stroke-width="1"/><path d="M29 234 L39.6 240" stroke="#3a1010" stroke-width="7" stroke-linecap="round" fill="none"/><path d="M34.2 234.6 V230.4" stroke="#20203a" stroke-width="5.2" fill="none"/><path d="M29 233.6 L39.6 239.4" stroke="url(#rainG2)" stroke-width="5" stroke-linecap="round" fill="none"/><path d="M34.2 235 V230.6" stroke="#2a48d8" stroke-width="3.6" fill="none"/><ellipse cx="34.2" cy="230.4" rx="2.2" ry="1" fill="#3a78e8" stroke="#20203a" stroke-width="0.6"/></g>
<use href="#expD" x="5.6" y="230.6"/>
<g><path d="M44.800000000000004 248.4 L48.800000000000004 254.4 L44.800000000000004 256.4 L41.0 254.4 Z" fill="#f6e890" stroke="#b89c18" stroke-width="0.7" stroke-linejoin="round"/><path d="M44.800000000000004 248.4 V256.4" stroke="#b89c18" stroke-width="0.5"/><path d="M44.800000000000004 248.4 L48.800000000000004 254.4 L44.800000000000004 256.4 Z" fill="#6f98d0" fill-opacity="0.55"/><circle cx="41.0" cy="258.0" r="3.6" fill="url(#sphB)" stroke="#8aa4c8" stroke-width="0.7"/><path d="M45.6 257.0 L47.2 255.6 H52.6 V260.4 L51.0 261.8 H45.6 Z" fill="#dfe9f5" stroke="#8aa4c8" stroke-width="0.7" stroke-linejoin="round"/><path d="M45.6 257.0 H51.0 V261.8 M51.0 257.0 L52.6 255.6" fill="none" stroke="#8aa4c8" stroke-width="0.6"/></g>
<use href="#expD" x="23.6" y="252.6"/>
<g><path d="M63.0 267.2 L67.0 273.2 L63.0 275.2 L59.199999999999996 273.2 Z" fill="#f4e070" stroke="#b89c18" stroke-width="0.7" stroke-linejoin="round"/><path d="M63.0 267.2 V275.2" stroke="#b89c18" stroke-width="0.5"/><path d="M63.0 267.2 L67.0 273.2 L63.0 275.2 Z" fill="#6f98d0" fill-opacity="0.0"/><circle cx="59.199999999999996" cy="276.8" r="3.6" fill="url(#sphY)" stroke="#b89c18" stroke-width="0.7"/><path d="M63.8 275.8 L65.4 274.4 H70.8 V279.2 L69.2 280.59999999999997 H63.8 Z" fill="#f0dc58" stroke="#b89c18" stroke-width="0.7" stroke-linejoin="round"/><path d="M63.8 275.8 H69.2 V280.59999999999997 M69.2 275.8 L70.8 274.4" fill="none" stroke="#b89c18" stroke-width="0.6"/></g>
<use href="#expD" x="41.8" y="271.6"/>
<use href="#tcube" x="73.8" y="285.6"/>
<use href="#tcube" x="73.8" y="304.6"/>
<use href="#tcube" x="73.8" y="323.6"/>
<use href="#tcube" x="73.8" y="342.6"/>
<use href="#tcube" x="73.8" y="361.6"/>
<use href="#tcube" x="73.8" y="380.6"/>
<use href="#tcube" x="73.8" y="399.6"/>
<use href="#tcube" x="73.8" y="418.6"/>
<use href="#tcube" x="73.8" y="437.6"/>
<use href="#tcube" x="73.8" y="456.6"/>
<g id="icoBCt"><path d="M45.6 477 H50.6 A2.4 6.4 0 0 1 50.6 489.8 H45.6 Z" fill="#f0d82c" stroke="#5a5010" stroke-width="0.9"/><ellipse cx="45.6" cy="483.4" rx="2.2" ry="6.4" fill="#c8b020" stroke="#5a5010" stroke-width="0.9"/><path d="M37.4 481.9 H41.6 V479.4 L46.2 483.4 L41.6 487.4 V484.9 H37.4 Z" fill="#34506e"/></g>
<g id="icoICt"><path d="M45.6 496 H50.6 A2.4 6.4 0 0 1 50.6 508.8 H45.6 Z" fill="#f6f6f6" stroke="#4a4a4a" stroke-width="0.9"/><ellipse cx="45.6" cy="502.4" rx="2.2" ry="6.4" fill="#fff" stroke="#4a4a4a" stroke-width="0.9"/><path d="M48.6 496.2 V508.6" stroke="#8a8a8a" stroke-width="0.6"/><path d="M37.4 500.9 H41.6 V498.4 L46.2 502.4 L41.6 506.4 V503.9 H37.4 Z" fill="#34506e"/></g>
<g id="icoMeshT"><path d="M45 513.8 L52.6 522.4 L45 527.6 L37.4 522.4 Z" fill="#f8ea80" stroke="#9a8a20" stroke-width="0.9" stroke-linejoin="round"/><path d="M45 513.8 V527.6 M37.4 522.4 H52.6" stroke="#9a8a20" stroke-width="0.7"/><path d="M45 513.8 L52.6 522.4 L45 527.6 Z" fill="#e4cc40" fill-opacity="0.6"/></g>
<use href="#expR" x="24.4" y="518.2"/>
<g id="icoMoveT"><use href="#tee" transform="translate(37.4 534) scale(0.98)"/><path d="M47 533.6 A4 3 0 0 1 51.6 535.2 M41.6 546.2 A4 3 0 0 1 37.6 544" fill="none" stroke="#222" stroke-width="0.9"/><path d="M52.6 533 L51.8 536.4 L49.6 534.6 Z M37 546.4 L37.6 543 L40 544.8 Z" fill="#222"/></g>
<g id="icoGroup"><path d="M38 563 V552 H42.4 L43.6 553.6 H50.4 V563 Z" fill="url(#foldG)" stroke="#d8a848" stroke-width="0.9" stroke-linejoin="round"/><path d="M43.2 558.6 L45 557 H52.6 V564 L50.8 565.8 H43.2 Z" fill="#8aa8d4" stroke="#5a7cac" stroke-width="0.8" stroke-linejoin="round"/><rect x="43.2" y="558.6" width="7.6" height="7.2" fill="url(#cubF)" stroke="#5a7cac" stroke-width="0.8"/></g>
<g id="icoSolveT"><circle cx="39.8" cy="574.6" r="1.3" fill="#f0e048" stroke="#8a7a18" stroke-width="0.5"/><circle cx="44.4" cy="574.6" r="1.3" fill="#f0e048" stroke="#8a7a18" stroke-width="0.5"/><circle cx="49" cy="574.6" r="1.3" fill="#f0e048" stroke="#8a7a18" stroke-width="0.5"/><use href="#sarrow" x="37.8" y="576.2"/></g>
<use href="#expD" x="23.6" y="576"/>
<g><circle cx="62.6" cy="594.2" r="1.4" fill="#f0e048" stroke="#8a7a18" stroke-width="0.5"/><use href="#sarrow" x="56.2" y="595.4"/></g>
<use href="#expR" x="42.8" y="594"/>
<g><circle cx="62.6" cy="613.2" r="1.4" fill="#f0e048" stroke="#8a7a18" stroke-width="0.5"/><use href="#sarrow" x="56.2" y="614.4"/></g>
<g id="ptbtns" fill="none" stroke="#111" stroke-width="1.3"><rect x="229.5" y="136.5" width="4.6" height="4" /><rect x="227.5" y="139.5" width="4.6" height="4" fill="#d8d8d8"/><path d="M243.6 137 L250.4 143.8 M250.4 137 L243.6 143.8" stroke-width="1.5"/></g>
</svg>

<!-- text labels -->
<span class="t" id="t0" style="left:1042.90px;top:-9.90px;font-size:11.7px;color:#8a8a8a;font-style:italic;letter-spacing:-0.134px;">Entrez mot-clé ou expression</span>
<span class="t" id="t1" style="left:1292.90px;top:-9.90px;font-size:11.7px;color:#f4f4f4;letter-spacing:-0.023px;">Se connecter</span>
<span class="t" id="t2" style="left:49.40px;top:11.00px;font-size:12.15px;color:#222;letter-spacing:0.099px;">Configuration</span>
<span class="t" id="t3" style="left:143.20px;top:11.00px;font-size:12.15px;color:#ffffff;letter-spacing:-0.357px;">Résultats</span>
<span class="t" id="t4" style="left:210.40px;top:11.00px;font-size:12.15px;color:#ffffff;letter-spacing:-0.213px;">Centre de décision</span>
<span class="t" id="t5" style="left:327.90px;top:11.00px;font-size:12.15px;color:#ffffff;letter-spacing:-0.119px;">Vue</span>
<span class="t" id="t6" style="left:368.20px;top:11.00px;font-size:12.15px;color:#ffffff;letter-spacing:0.104px;">Vault</span>
<span class="t" id="t7" style="left:415.00px;top:11.00px;font-size:12.15px;color:#ffffff;letter-spacing:-0.279px;">Autodesk 360</span>
<span class="t" id="t8" style="left:506.10px;top:11.00px;font-size:12.15px;color:#ffffff;letter-spacing:-0.176px;">Démarrer et apprendre</span>
<span class="t" id="t9" style="left:645.40px;top:11.00px;font-size:12.15px;color:#ffffff;letter-spacing:0.141px;">Communauté</span>
<span class="t" id="t10" style="left:14.10px;top:69.60px;font-size:12.15px;color:#2e2e2e;letter-spacing:0.239px;">Ajouter/mettre</span>
<span class="t" id="t11" style="left:1.20px;top:84.10px;font-size:12.15px;color:#2e2e2e;letter-spacing:-0.025px;">à jour la conception</span>
<span class="t" id="t12" style="left:134.50px;top:47.40px;font-size:12.15px;color:#2e2e2e;letter-spacing:-0.374px;">Gabarits</span>
<span class="t" id="t13" style="left:134.50px;top:71.50px;font-size:12.15px;color:#2e2e2e;letter-spacing:-0.633px;">Règles</span>
<span class="t" id="t14" style="left:7.50px;top:104.90px;font-size:12.15px;color:#2e2e2e;letter-spacing:-0.002px;">Outils d&#x27;étude de conception</span>
<span class="t" id="t15" style="left:210.20px;top:69.10px;font-size:12.15px;color:#2e2e2e;letter-spacing:0.076px;">Outils</span>
<span class="t" id="t16" style="left:190.70px;top:83.80px;font-size:12.15px;color:#2e2e2e;letter-spacing:-0.098px;">de géométrie</span>
<span class="t" id="t17" style="left:277.20px;top:69.10px;font-size:12.15px;color:#2e2e2e;letter-spacing:-0.113px;">Matériaux</span>
<span class="t" id="t18" style="left:335.30px;top:69.10px;font-size:12.15px;color:#2e2e2e;letter-spacing:0.043px;">Conditions</span>
<span class="t" id="t19" style="left:347.40px;top:83.80px;font-size:12.15px;color:#2e2e2e;letter-spacing:0.071px;">limites</span>
<span class="t" id="t20" style="left:399.50px;top:69.10px;font-size:12.15px;color:#2e2e2e;letter-spacing:0.032px;">Conditions</span>
<span class="t" id="t21" style="left:407.20px;top:83.80px;font-size:12.15px;color:#2e2e2e;letter-spacing:-0.044px;">initiales</span>
<span class="t" id="t22" style="left:479.40px;top:69.10px;font-size:12.15px;color:#2e2e2e;letter-spacing:0.088px;">Taille</span>
<span class="t" id="t23" style="left:463.40px;top:83.80px;font-size:12.15px;color:#2e2e2e;letter-spacing:-0.109px;">de maillage</span>
<span class="t" id="t24" style="left:530.30px;top:69.10px;font-size:12.15px;color:#2e2e2e;letter-spacing:0.163px;">Mouvement</span>
<span class="t" id="t25" style="left:325.90px;top:104.90px;font-size:12.15px;color:#2e2e2e;letter-spacing:-0.059px;">Configuration des tâches</span>
<span class="t" id="t26" style="left:606.30px;top:69.20px;font-size:12.15px;color:#2e2e2e;letter-spacing:-0.420px;">Résoudre</span>
<span class="t" id="t27" style="left:683.30px;top:35.10px;font-size:12.15px;color:#2e2e2e;letter-spacing:-0.169px;">Gestion du solveur</span>
<span class="t" id="t28" style="left:682.90px;top:59.10px;font-size:12.15px;color:#2e2e2e;letter-spacing:0.106px;">Job Monitor</span>
<span class="t" id="t29" style="left:683.70px;top:83.20px;font-size:12.15px;color:#2e2e2e;letter-spacing:0.128px;">Notifications</span>
<span class="t" id="t30" style="left:659.30px;top:105.10px;font-size:12.15px;color:#2e2e2e;letter-spacing:0.021px;">Simulation</span>
<span class="t" id="t31" style="left:816.20px;top:36.80px;font-size:12.15px;color:#2e2e2e;letter-spacing:0.133px;">Volume</span>
<span class="t" id="t32" style="left:816.20px;top:59.10px;font-size:12.15px;color:#2e2e2e;letter-spacing:-0.378px;">Surface</span>
<span class="t" id="t33" style="left:897.20px;top:35.40px;font-size:12.15px;color:#2e2e2e;letter-spacing:-0.086px;">Direct</span>
<span class="t" id="t34" style="left:898.20px;top:59.10px;font-size:12.15px;color:#2e2e2e;letter-spacing:-0.189px;">Sélection précédente</span>
<span class="t" id="t35" style="left:898.90px;top:83.00px;font-size:12.15px;color:#2e2e2e;letter-spacing:-0.012px;">Tout sélectionner</span>
<span class="t" id="t36" style="left:1038.10px;top:35.40px;font-size:12.15px;color:#2e2e2e;letter-spacing:0.211px;">Afficher tout</span>
<span class="t" id="t37" style="left:1038.10px;top:59.10px;font-size:12.15px;color:#2e2e2e;letter-spacing:-0.185px;">Désélectionner</span>
<span class="t" id="t38" style="left:1038.10px;top:83.00px;font-size:12.15px;color:#2e2e2e;letter-spacing:0.016px;">Tout désélectionner</span>
<span class="t" id="t39" style="left:946.10px;top:105.00px;font-size:12.15px;color:#2e2e2e;letter-spacing:-0.228px;">Sélection</span>
<span class="t" id="t40" style="left:1156.30px;top:69.10px;font-size:12.15px;color:#2e2e2e;letter-spacing:0.227px;">Modifier</span>
<span class="t" id="t41" style="left:1207.20px;top:69.30px;font-size:12.15px;color:#2e2e2e;letter-spacing:-0.080px;">Supprimer</span>
<span class="t" id="t42" style="left:1290.10px;top:47.40px;font-size:12.15px;color:#2e2e2e;letter-spacing:-0.161px;">Editeur de matériau</span>
<span class="t" id="t43" style="left:1290.10px;top:71.30px;font-size:12.15px;color:#2e2e2e;letter-spacing:-0.109px;">Environnement du scénario</span>
<span class="t" id="t44" style="left:1270.10px;top:104.90px;font-size:12.15px;color:#2e2e2e;letter-spacing:-0.068px;">Matériaux</span>
<span class="t" id="t45" style="left:816.20px;top:81.00px;font-size:12.15px;color:#b4b4b4;letter-spacing:-0.146px;">Arête</span>
<span class="t" id="t46" style="left:-4.30px;top:130.80px;font-size:11.3px;color:#1a1a1a;letter-spacing:-0.228px;">Barre d&#x27;étude de conception</span>
<span class="t" id="t47" style="left:22.90px;top:157.00px;font-size:13.3px;color:#1a1a1a;letter-spacing:-0.015px;">remarque</span>
<span class="t" id="t48" style="left:30.90px;top:180.30px;font-size:13.3px;color:#000;font-weight:bold;letter-spacing:-0.235px;">Conception 1</span>
<span class="t" id="t49" style="left:41.40px;top:202.00px;font-size:13.3px;color:#1a1a1a;letter-spacing:-0.161px;">Géométrie (cm)</span>
<span class="t" id="t50" style="left:48.80px;top:225.00px;font-size:13.3px;color:#0000f0;font-weight:bold;letter-spacing:-0.377px;">Scénario 1</span>
<span class="t" id="t51" style="left:59.00px;top:246.60px;font-size:13.3px;color:#1b1bdc;letter-spacing:0.083px;">Matériau</span>
<span class="t" id="t52" style="left:77.20px;top:265.60px;font-size:13.3px;color:#1b1bdc;letter-spacing:-0.427px;">Pas affecté</span>
<span class="t" id="t53" style="left:94.80px;top:285.10px;font-size:13.3px;color:#1b1bdc;letter-spacing:-1.027px;">1 RECEIVER-CHIP:3</span>
<span class="t" id="t54" style="left:94.80px;top:304.10px;font-size:13.3px;color:#1b1bdc;letter-spacing:-0.585px;">2 Component7:1@RECEI...</span>
<span class="t" id="t55" style="left:94.80px;top:323.10px;font-size:13.3px;color:#1b1bdc;letter-spacing:-1.021px;">3 RECEIVER-CHIP:3_U_Co...</span>
<span class="t" id="t56" style="left:94.80px;top:342.10px;font-size:13.3px;color:#1b1bdc;letter-spacing:-1.051px;">4 RECEIVER-TRANSCEIV...</span>
<span class="t" id="t57" style="left:94.80px;top:361.10px;font-size:13.3px;color:#1b1bdc;letter-spacing:-0.355px;">5 Component9:1@Stand...</span>
<span class="t" id="t58" style="left:94.80px;top:380.10px;font-size:13.3px;color:#1b1bdc;letter-spacing:-0.999px;">6 RECEIVER-BOARD:1</span>
<span class="t" id="t59" style="left:94.80px;top:399.10px;font-size:13.3px;color:#1b1bdc;letter-spacing:-0.585px;">7 Component6:1@RECEI...</span>
<span class="t" id="t60" style="left:94.80px;top:418.10px;font-size:13.3px;color:#1b1bdc;letter-spacing:-0.355px;">8 Component8:1@Stand...</span>
<span class="t" id="t61" style="left:94.80px;top:437.10px;font-size:13.3px;color:#1b1bdc;letter-spacing:-1.027px;">9 RECEIVER-CHIP:2</span>
<span class="t" id="t62" style="left:94.80px;top:456.10px;font-size:13.3px;color:#1b1bdc;letter-spacing:-0.992px;">10 RECEIVER-CHIP:1</span>
<span class="t" id="t63" style="left:59.00px;top:475.10px;font-size:13.3px;color:#1b1bdc;letter-spacing:-0.078px;">Conditions limites</span>
<span class="t" id="t64" style="left:59.00px;top:494.10px;font-size:13.3px;color:#1b1bdc;letter-spacing:-0.084px;">Conditions initiales</span>
<span class="t" id="t65" style="left:59.00px;top:513.10px;font-size:13.3px;color:#1b1bdc;letter-spacing:-0.133px;">Taille du maillage</span>
<span class="t" id="t66" style="left:59.00px;top:532.10px;font-size:13.3px;color:#1b1bdc;letter-spacing:-0.020px;">Mouvement</span>
<span class="t" id="t67" style="left:59.00px;top:551.10px;font-size:13.3px;color:#1b1bdc;letter-spacing:-0.129px;">Groupes</span>
<span class="t" id="t68" style="left:59.00px;top:570.10px;font-size:13.3px;color:#1b1bdc;letter-spacing:-0.345px;">Résoudre</span>
<span class="t" id="t69" style="left:77.20px;top:589.10px;font-size:13.3px;color:#1b1bdc;letter-spacing:-0.154px;">Débit: Activé</span>
<span class="t" id="t70" style="left:77.20px;top:608.10px;font-size:13.3px;color:#1b1bdc;letter-spacing:-0.223px;">Transfert thermique: Désact...</span>
<span class="t" id="t71" style="left:297.60px;top:763.70px;font-size:11.3px;color:#000;letter-spacing:-0.212px;">Pas affecté</span>
<span class="t" id="t72" style="left:263.60px;top:798.00px;font-size:12.15px;color:#000;letter-spacing:-0.621px;">Barre données de sortie</span>
<span class="t" id="t73" style="left:1322.40px;top:824.20px;font-size:12.15px;color:#101010;letter-spacing:-0.207px;">0 Volume(s) sélectionné(es)</span>
<span class="t" id="t74" style="left:676.10px;top:152.80px;font-size:10.5px;color:#111;letter-spacing:-0.822px;">Z</span>
<span class="t" id="t75" style="left:676.20px;top:240.70px;font-size:10.3px;color:#000;letter-spacing:-0.156px;">15,24</span>
<span class="t" id="t76" style="left:698.50px;top:744.00px;font-size:11.3px;color:#000;letter-spacing:0.103px;">0</span>
<span class="t" id="t77" style="left:829.30px;top:744.00px;font-size:11.3px;color:#000;letter-spacing:-0.178px;">5.33917</span>
<span class="t" id="t78" style="left:916.60px;top:744.00px;font-size:11.3px;color:#000;letter-spacing:0.019px;">cm</span>
<span class="t" id="t79" style="left:980.20px;top:744.00px;font-size:11.3px;color:#000;letter-spacing:-0.292px;">10.6783</span>
<span class="t" id="t80" style="left:1130.30px;top:744.00px;font-size:11.3px;color:#000;letter-spacing:-0.349px;">16.0175</span>
<span class="t" id="t81" style="left:1526.90px;top:694.80px;font-size:11px;color:#000;letter-spacing:-0.500px;">z</span>
<span class="t" id="t82" style="left:1549.30px;top:717.00px;font-size:11px;color:#000;letter-spacing:-0.300px;">y</span>
<span class="t" id="t83" style="left:1557.10px;top:746.70px;font-size:11px;color:#000;letter-spacing:-0.100px;">x</span>

</div>
</body>
</html>
